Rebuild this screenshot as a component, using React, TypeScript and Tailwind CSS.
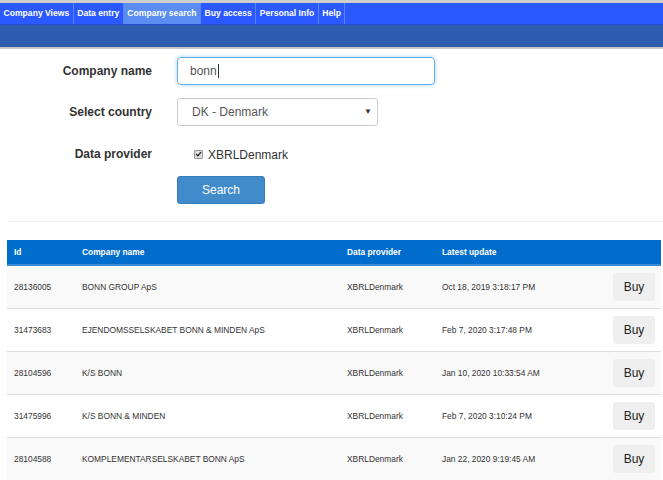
const NAV = ["Company Views", "Data entry", "Company search", "Buy access", "Personal Info", "Help"];

const ROWS = [
  { id: "28136005", name: "BONN GROUP ApS", provider: "XBRLDenmark", updated: "Oct 18, 2019 3:18:17 PM" },
  { id: "31473683", name: "EJENDOMSSELSKABET BONN & MINDEN ApS", provider: "XBRLDenmark", updated: "Feb 7, 2020 3:17:48 PM" },
  { id: "28104596", name: "K/S BONN", provider: "XBRLDenmark", updated: "Jan 10, 2020 10:33:54 AM" },
  { id: "31475996", name: "K/S BONN & MINDEN", provider: "XBRLDenmark", updated: "Feb 7, 2020 3:10:24 PM" },
  { id: "28104588", name: "KOMPLEMENTARSELSKABET BONN ApS", provider: "XBRLDenmark", updated: "Jan 22, 2020 9:19:45 AM" },
];

const COLS = "grid grid-cols-[68px_265px_95px_1fr_60px] items-center";

export default function App() {
  return (
    <div className="min-h-[480px] bg-white font-['Liberation_Sans',Arial,sans-serif] text-[#333]">
      {/* menu */}
      <div className="h-[3px] bg-[#cfcfcf]" />
      <div className="flex h-[22px] bg-[#2c58ff] border-b border-[#2a4fd6]">
        {NAV.map((n) => (
          <div
            key={n}
            className={
              "flex items-center px-[3.5px] border-r border-[#5c83ff] text-[8.6px] font-bold text-white " +
              (n === "Company search" ? "bg-[#5b8cef]" : "")
            }
          >
            {n}
          </div>
        ))}
      </div>
      <div className="h-[22px] bg-[#2e5daf]" />
      <div className="h-[2px] bg-[#c9c9c9]" />

      {/* search form */}
      <div className="pt-[8px] grid grid-cols-[152px_1fr] gap-x-[25px] items-center">
        <label className="text-right text-[12px] font-bold">Company name</label>
        <div className="h-[28px] w-[258px] rounded-[4px] border border-[#66afe9] shadow-[0_0_4px_rgba(102,175,233,0.6)] flex items-center px-[12px] text-[12px] text-[#555]">
          bonn<span className="ml-[1px] h-[14px] w-px bg-[#333]" />
        </div>

        <label className="mt-[13px] text-right text-[12px] font-bold">Select country</label>
        <div className="mt-[13px] h-[28px] w-[201px] rounded-[3px] border border-[#ccc] flex items-center justify-between pl-[14px] pr-[5px] text-[12px] text-[#555]">
          <span>DK - Denmark</span>
          <span className="text-[8px] text-[#333]">▼</span>
        </div>

        <label className="mt-[18px] text-right text-[12px] font-bold">Data provider</label>
        <div className="mt-[18px] flex items-center pl-[17px] gap-[5px] text-[12px] text-[#333]">
          <span className="flex h-[9px] w-[9px] items-center justify-center rounded-[1px] border border-[#999] bg-[#ddd]">
            <svg viewBox="0 0 10 10" className="h-[8px] w-[8px]">
              <path d="M1.5 5.2 L4 7.6 L8.6 2.2" fill="none" stroke="#222" strokeWidth="1.8" />
            </svg>
          </span>
          <span className="pt-[2px]">XBRLDenmark</span>
        </div>

        <div />
        <button className="mt-[12px] h-[28px] w-[88px] rounded-[3px] border border-[#357ebd] bg-[#428bca] text-[12px] text-white">
          Search
        </button>
      </div>

      <div className="ml-[7px] mt-[17px] h-px bg-[#eee]" />

      {/* results */}
      <div className="ml-[7px] mr-[2px] mt-[18px]">
        <div className={COLS + " h-[26px] bg-[#006dcc] border-b-2 border-[#3b8ad6] text-[8.4px] font-bold text-white"}>
          <div className="pl-[7px]">Id</div>
          <div className="pl-[7px]">Company name</div>
          <div className="pl-[7px]">Data provider</div>
          <div className="pl-[7px]">Latest update</div>
          <div />
        </div>
        {ROWS.map((r, i) => (
          <div
            key={r.id}
            className={COLS + " h-[43px] border-b border-[#ddd] text-[8.4px] " + (i % 2 === 0 ? "bg-[#f9f9f9]" : "bg-white")}
          >
            <div className="pl-[7px]">{r.id}</div>
            <div className="pl-[7px]">{r.name}</div>
            <div className="pl-[7px]">{r.provider}</div>
            <div className="pl-[7px]">{r.updated}</div>
            <div className="flex justify-end pr-[6px]">
              <button className="h-[28px] w-[42px] rounded-[3px] bg-[#efefef] text-[12px] text-[#222]">Buy</button>
            </div>
          </div>
        ))}
      </div>
    </div>
  );
}
